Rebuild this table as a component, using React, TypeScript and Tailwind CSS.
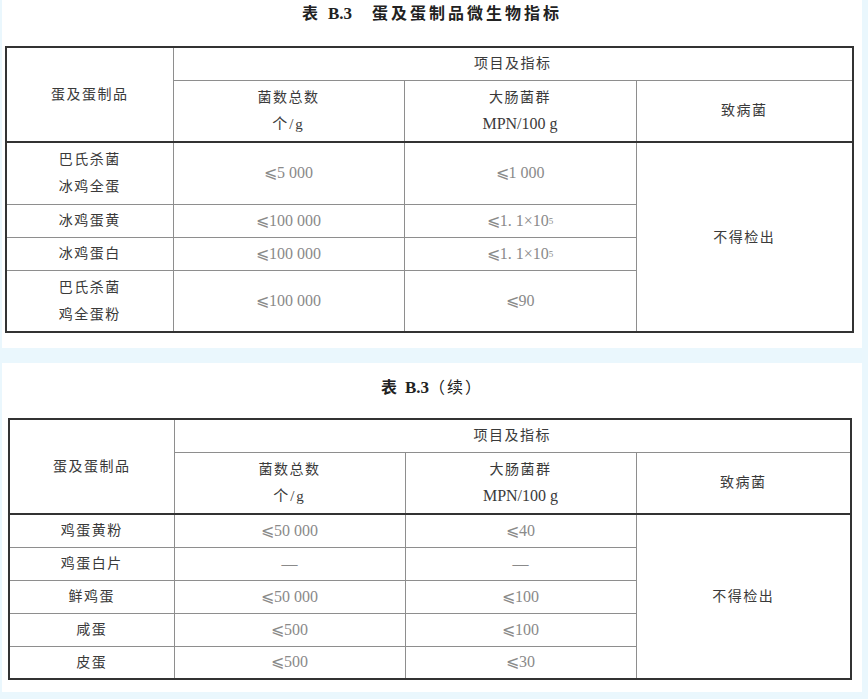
const cjk = { fontFamily: '"Liberation Serif", "Noto Sans CJK SC", serif' }

type Row = { name: string[]; total: React.ReactNode; coli: React.ReactNode; h: string }

const Sup = ({ base }: { base: string }) => (
  <span>
    ⩽{base}×10<sup className="text-[9px] relative -top-[2px]">5</sup>
  </span>
)

const rowsA: Row[] = [
  { name: ['巴氏杀菌', '冰鸡全蛋'], total: '⩽5 000', coli: '⩽1 000', h: 'h-[62px]' },
  { name: ['冰鸡蛋黄'], total: '⩽100 000', coli: <Sup base="1. 1" />, h: 'h-[33px]' },
  { name: ['冰鸡蛋白'], total: '⩽100 000', coli: <Sup base="1. 1" />, h: 'h-[33px]' },
  { name: ['巴氏杀菌', '鸡全蛋粉'], total: '⩽100 000', coli: '⩽90', h: 'h-[62px]' },
]

const rowsB: Row[] = [
  { name: ['鸡蛋黄粉'], total: '⩽50 000', coli: '⩽40', h: 'h-[33px]' },
  { name: ['鸡蛋白片'], total: '—', coli: '—', h: 'h-[33px]' },
  { name: ['鲜鸡蛋'], total: '⩽50 000', coli: '⩽100', h: 'h-[33px]' },
  { name: ['咸蛋'], total: '⩽500', coli: '⩽100', h: 'h-[33px]' },
  { name: ['皮蛋'], total: '⩽500', coli: '⩽30', h: 'h-[33px]' },
]

const td = 'border border-[#8e8e8e] text-center align-middle p-0'
const label = 'text-[14px] tracking-[1.5px] text-[#3a3a3a]'
const num = 'text-[16px] text-[#8a8a8a]'

function DataTable({ rows, cols, width }: { rows: Row[]; cols: string[]; width: string }) {
  return (
    <table className={`table-fixed border-collapse border-2 border-[#333] ${width}`} style={cjk}>
      <colgroup>
        {cols.map((c) => (
          <col key={c} className={c} />
        ))}
      </colgroup>
      <tbody>
        <tr className="h-[33px]">
          <td rowSpan={2} className={`${td} ${label} border-b-2 border-b-[#333]`}>
            蛋及蛋制品
          </td>
          <td colSpan={3} className={`${td} ${label}`}>
            项目及指标
          </td>
        </tr>
        <tr className="h-[62px]">
          <td className={`${td} ${label} border-b-2 border-b-[#333] leading-[26px]`}>
            <div>菌数总数</div>
            <div className="tracking-[2px] text-[15px]">个/g</div>
          </td>
          <td className={`${td} ${label} border-b-2 border-b-[#333] leading-[26px]`}>
            <div>大肠菌群</div>
            <div className="tracking-normal text-[16px]">MPN/100 g</div>
          </td>
          <td className={`${td} ${label} border-b-2 border-b-[#333]`}>致病菌</td>
        </tr>
        {rows.map((r, i) => (
          <tr key={i} className={r.h}>
            <td className={`${td} ${label} leading-[27px]`}>
              {r.name.map((n) => (
                <div key={n}>{n}</div>
              ))}
            </td>
            <td className={`${td} ${num}`}>{r.total}</td>
            <td className={`${td} ${num}`}>{r.coli}</td>
            {i === 0 && (
              <td rowSpan={rows.length} className={`${td} ${label}`}>
                不得检出
              </td>
            )}
          </tr>
        ))}
      </tbody>
    </table>
  )
}

export default function App() {
  return (
    <div className="w-[868px] h-[699px] bg-[#eaf7fd] overflow-hidden">
      {/* 表 B.3 */}
      <section className="ml-[2px] w-[860px] h-[348px] bg-white pt-[4px]">
        <h2
          className="text-center text-[16px] font-bold leading-[20px] text-[#222] tracking-[3px]"
          style={cjk}
        >
          表 <span className="tracking-normal text-[17px]">B.3</span>
          <span className="inline-block w-[20px]" />
          蛋及蛋制品微生物指标
        </h2>
        <div className="mt-[22px] ml-[3px]">
          <DataTable
            rows={rowsA}
            cols={['w-[167px]', 'w-[231px]', 'w-[232px]', 'w-[217px]']}
            width="w-[847px]"
          />
        </div>
      </section>

      {/* 表 B.3（续） */}
      <section className="ml-[2px] mt-[15px] w-[860px] h-[329px] bg-white pt-[15px]">
        <h2
          className="text-center text-[16px] font-bold leading-[20px] text-[#222] tracking-[2px]"
          style={cjk}
        >
          表 <span className="tracking-normal text-[17px]">B.3</span>
          <span className="font-normal">（续）</span>
        </h2>
        <div className="mt-[20px] ml-[6px]">
          <DataTable
            rows={rowsB}
            cols={['w-[165px]', 'w-[231px]', 'w-[231px]', 'w-[215px]']}
            width="w-[842px]"
          />
        </div>
      </section>
    </div>
  )
}
